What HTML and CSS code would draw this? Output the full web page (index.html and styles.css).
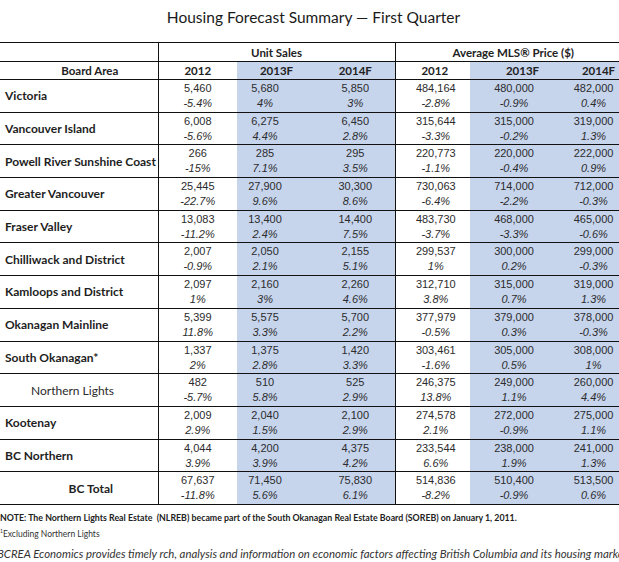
FILE: index.html
```html
<!DOCTYPE html>
<html>
<head>
<title>Housing Forecast Summary</title>
<link rel="stylesheet" href="styles.css">
</head>
<body>
<h1 class="title">Housing Forecast Summary — First Quarter</h1>

<table class="forecast">
<colgroup>
<col class="col-area">
<col class="col-unit">
<col class="col-unit">
<col class="col-unit">
<col class="col-price">
<col class="col-price">
<col class="col-price">
</colgroup>
<thead>
<tr class="group-row">
<th class="area"></th>
<th colspan="3" class="group">Unit Sales</th>
<th colspan="3" class="group price">Average MLS® Price ($)</th>
</tr>
<tr class="year-row">
<th class="area">Board Area</th>
<th>2012</th>
<th class="fc">2013F</th>
<th class="fc">2014F</th>
<th>2012</th>
<th class="fc">2013F</th>
<th class="fc">2014F</th>
</tr>
</thead>
<tbody>
<tr>
<th class="area">Victoria</th>
<td><span class="val">5,460</span><span class="pct">-5.4%</span></td>
<td class="fc"><span class="val">5,680</span><span class="pct">4%</span></td>
<td class="fc"><span class="val">5,850</span><span class="pct">3%</span></td>
<td><span class="val">484,164</span><span class="pct">-2.8%</span></td>
<td class="fc"><span class="val">480,000</span><span class="pct">-0.9%</span></td>
<td class="fc"><span class="val">482,000</span><span class="pct">0.4%</span></td>
</tr>
<tr>
<th class="area">Vancouver Island</th>
<td><span class="val">6,008</span><span class="pct">-5.6%</span></td>
<td class="fc"><span class="val">6,275</span><span class="pct">4.4%</span></td>
<td class="fc"><span class="val">6,450</span><span class="pct">2.8%</span></td>
<td><span class="val">315,644</span><span class="pct">-3.3%</span></td>
<td class="fc"><span class="val">315,000</span><span class="pct">-0.2%</span></td>
<td class="fc"><span class="val">319,000</span><span class="pct">1.3%</span></td>
</tr>
<tr>
<th class="area">Powell River Sunshine Coast</th>
<td><span class="val">266</span><span class="pct">-15%</span></td>
<td class="fc"><span class="val">285</span><span class="pct">7.1%</span></td>
<td class="fc"><span class="val">295</span><span class="pct">3.5%</span></td>
<td><span class="val">220,773</span><span class="pct">-1.1%</span></td>
<td class="fc"><span class="val">220,000</span><span class="pct">-0.4%</span></td>
<td class="fc"><span class="val">222,000</span><span class="pct">0.9%</span></td>
</tr>
<tr>
<th class="area">Greater Vancouver</th>
<td><span class="val">25,445</span><span class="pct">-22.7%</span></td>
<td class="fc"><span class="val">27,900</span><span class="pct">9.6%</span></td>
<td class="fc"><span class="val">30,300</span><span class="pct">8.6%</span></td>
<td><span class="val">730,063</span><span class="pct">-6.4%</span></td>
<td class="fc"><span class="val">714,000</span><span class="pct">-2.2%</span></td>
<td class="fc"><span class="val">712,000</span><span class="pct">-0.3%</span></td>
</tr>
<tr>
<th class="area">Fraser Valley</th>
<td><span class="val">13,083</span><span class="pct">-11.2%</span></td>
<td class="fc"><span class="val">13,400</span><span class="pct">2.4%</span></td>
<td class="fc"><span class="val">14,400</span><span class="pct">7.5%</span></td>
<td><span class="val">483,730</span><span class="pct">-3.7%</span></td>
<td class="fc"><span class="val">468,000</span><span class="pct">-3.3%</span></td>
<td class="fc"><span class="val">465,000</span><span class="pct">-0.6%</span></td>
</tr>
<tr>
<th class="area">Chilliwack and District</th>
<td><span class="val">2,007</span><span class="pct">-0.9%</span></td>
<td class="fc"><span class="val">2,050</span><span class="pct">2.1%</span></td>
<td class="fc"><span class="val">2,155</span><span class="pct">5.1%</span></td>
<td><span class="val">299,537</span><span class="pct">1%</span></td>
<td class="fc"><span class="val">300,000</span><span class="pct">0.2%</span></td>
<td class="fc"><span class="val">299,000</span><span class="pct">-0.3%</span></td>
</tr>
<tr>
<th class="area">Kamloops and District</th>
<td><span class="val">2,097</span><span class="pct">1%</span></td>
<td class="fc"><span class="val">2,160</span><span class="pct">3%</span></td>
<td class="fc"><span class="val">2,260</span><span class="pct">4.6%</span></td>
<td><span class="val">312,710</span><span class="pct">3.8%</span></td>
<td class="fc"><span class="val">315,000</span><span class="pct">0.7%</span></td>
<td class="fc"><span class="val">319,000</span><span class="pct">1.3%</span></td>
</tr>
<tr>
<th class="area">Okanagan Mainline</th>
<td><span class="val">5,399</span><span class="pct">11.8%</span></td>
<td class="fc"><span class="val">5,575</span><span class="pct">3.3%</span></td>
<td class="fc"><span class="val">5,700</span><span class="pct">2.2%</span></td>
<td><span class="val">377,979</span><span class="pct">-0.5%</span></td>
<td class="fc"><span class="val">379,000</span><span class="pct">0.3%</span></td>
<td class="fc"><span class="val">378,000</span><span class="pct">-0.3%</span></td>
</tr>
<tr>
<th class="area">South Okanagan*</th>
<td><span class="val">1,337</span><span class="pct">2%</span></td>
<td class="fc"><span class="val">1,375</span><span class="pct">2.8%</span></td>
<td class="fc"><span class="val">1,420</span><span class="pct">3.3%</span></td>
<td><span class="val">303,461</span><span class="pct">-1.6%</span></td>
<td class="fc"><span class="val">305,000</span><span class="pct">0.5%</span></td>
<td class="fc"><span class="val">308,000</span><span class="pct">1%</span></td>
</tr>
<tr>
<th class="area sub">Northern Lights</th>
<td><span class="val">482</span><span class="pct">-5.7%</span></td>
<td class="fc"><span class="val">510</span><span class="pct">5.8%</span></td>
<td class="fc"><span class="val">525</span><span class="pct">2.9%</span></td>
<td><span class="val">246,375</span><span class="pct">13.8%</span></td>
<td class="fc"><span class="val">249,000</span><span class="pct">1.1%</span></td>
<td class="fc"><span class="val">260,000</span><span class="pct">4.4%</span></td>
</tr>
<tr>
<th class="area">Kootenay</th>
<td><span class="val">2,009</span><span class="pct">2.9%</span></td>
<td class="fc"><span class="val">2,040</span><span class="pct">1.5%</span></td>
<td class="fc"><span class="val">2,100</span><span class="pct">2.9%</span></td>
<td><span class="val">274,578</span><span class="pct">2.1%</span></td>
<td class="fc"><span class="val">272,000</span><span class="pct">-0.9%</span></td>
<td class="fc"><span class="val">275,000</span><span class="pct">1.1%</span></td>
</tr>
<tr>
<th class="area">BC Northern</th>
<td><span class="val">4,044</span><span class="pct">3.9%</span></td>
<td class="fc"><span class="val">4,200</span><span class="pct">3.9%</span></td>
<td class="fc"><span class="val">4,375</span><span class="pct">4.2%</span></td>
<td><span class="val">233,544</span><span class="pct">6.6%</span></td>
<td class="fc"><span class="val">238,000</span><span class="pct">1.9%</span></td>
<td class="fc"><span class="val">241,000</span><span class="pct">1.3%</span></td>
</tr>
<tr class="total">
<th class="area">BC Total</th>
<td><span class="val">67,637</span><span class="pct">-11.8%</span></td>
<td class="fc"><span class="val">71,450</span><span class="pct">5.6%</span></td>
<td class="fc"><span class="val">75,830</span><span class="pct">6.1%</span></td>
<td><span class="val">514,836</span><span class="pct">-8.2%</span></td>
<td class="fc"><span class="val">510,400</span><span class="pct">-0.9%</span></td>
<td class="fc"><span class="val">513,500</span><span class="pct">0.6%</span></td>
</tr>
</tbody>
</table>

<p class="note">NOTE: The Northern Lights Real Estate &nbsp;(NLREB) became part of the South Okanagan Real Estate Board (SOREB) on January 1, 2011.</p>
<p class="footnote"><sup>1</sup>Excluding Northern Lights</p>
<div class="about"><p>BCREA Economics provides timely rch, analysis and information on economic factors affecting British Columbia and its housing market.</p></div>
</body>
</html>
```

FILE: styles.css
```css
body {
margin: 0;
font-family: Lato, "Liberation Sans", sans-serif;
color: #1e1e1e;
background-color: #ffffff;
overflow: hidden;
}

.title {
margin: 0;
height: 42px;
padding-left: 8px;
font-size: 15.5px;
font-weight: normal;
line-height: 35px;
text-align: center;
color: #1a1a1a;
}

.forecast {
width: 619px;
table-layout: fixed;
border-collapse: collapse;
}
.col-area { width: 158px; }
.col-unit { width: 79px; }
.col-price { width: 75px; }

.forecast th,
.forecast td {
padding: 0;
border-bottom: 1px solid #111;
text-align: center;
}
.forecast thead tr:first-child th {
border-top: 1px solid #111;
}
.forecast th.area,
.forecast td:nth-child(4),
.forecast thead .group-row th:nth-child(2),
.forecast thead .year-row th:nth-child(4) {
border-right: 1px solid #111;
}

/* headers */
.forecast thead th {
font-size: 11.5px;
font-weight: bold;
color: #222;
}
.group-row th {
height: 18px;
}
.year-row th {
height: 17px;
}
.year-row th.area {
padding-left: 22px;
}
.group.price {
padding-left: 11px;
}
.year-row th:nth-child(5) { padding-left: 4px; }
.year-row th:nth-child(6) { padding-left: 30px; }
.year-row th:nth-child(7) { padding-left: 32px; }

.fc {
background-color: #c6d4ec;
}

/* body rows */
.forecast tbody th.area {
text-align: left;
padding-left: 5px;
font-size: 12px;
font-weight: bold;
color: #1e1e1e;
white-space: nowrap;
}
.forecast tbody th.sub {
padding-left: 31px;
font-weight: normal;
color: #2a2a2a;
}
.forecast .total th.area {
text-align: center;
padding-left: 24px;
}

.forecast tbody td {
padding-top: 1px;
padding-bottom: 0.7px;
font-family: "Liberation Sans", sans-serif;
font-size: 11px;
line-height: 15px;
color: #2c2c2c;
white-space: nowrap;
}
.forecast tbody td:nth-child(3) { padding-right: 23px; }
.forecast tbody td:nth-child(5) { padding-left: 6px; }
.forecast tbody td:nth-child(6) { padding-left: 13px; }
.forecast tbody td:nth-child(7) { padding-left: 22px; }

.val,
.pct {
display: block;
}
.pct {
font-style: italic;
}

/* notes below the table */
.note {
margin: 7px 0 0;
font-size: 8.8px;
font-weight: bold;
color: #222;
}
.footnote {
margin: 5px 0 0;
font-size: 8.5px;
color: #333;
}
.footnote sup {
font-size: 5px;
}
.about {
margin-top: 8px;
white-space: nowrap;
overflow: hidden;
}
.about p {
margin: 0 0 0 -3px;
font-size: 11.4px;
font-style: italic;
color: #333;
}
```
